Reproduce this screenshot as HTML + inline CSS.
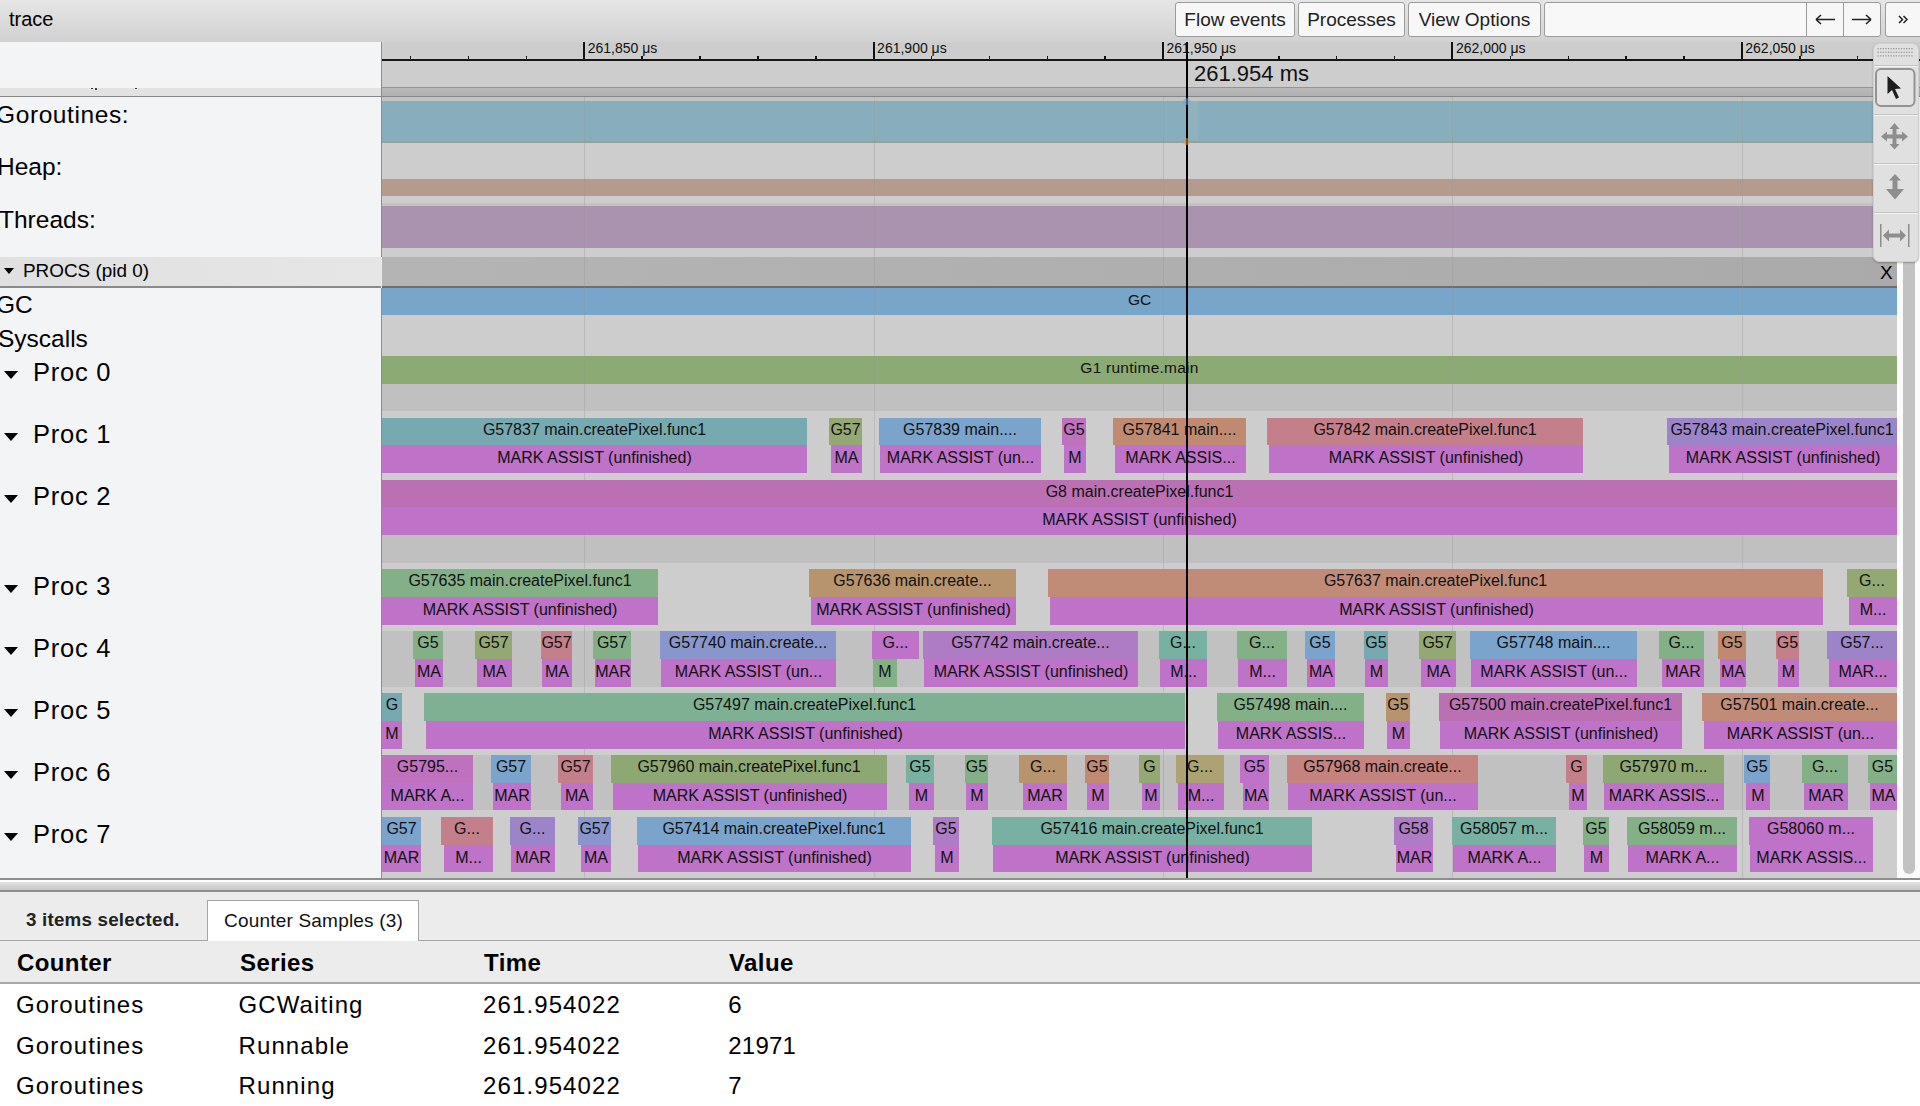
<!DOCTYPE html>
<html><head><meta charset="utf-8">
<style>
*{box-sizing:border-box;}
html,body{margin:0;padding:0;width:1920px;height:1106px;overflow:hidden;background:#ececec;font-family:"Liberation Sans",sans-serif;color:#000;}
.a{position:absolute;}
.t{position:absolute;white-space:nowrap;line-height:1;}
#top{left:0;top:0;width:1920px;height:42px;background:linear-gradient(#e6e6e6,#d1d1d1);}
.btn{position:absolute;top:2px;height:35px;border:1px solid #9c9c9c;border-radius:3px;background:#f7f7f7;font-size:19px;color:#222;text-align:center;line-height:33px;white-space:nowrap;}
#left{left:0;top:42px;width:381px;height:837px;background:#f3f4f6;}
#lborder{left:381px;top:42px;width:1px;height:837px;background:#8c8c8c;}
#ruler{left:382px;top:42px;width:1538px;height:45px;background:#cdcdcd;}
.mt{position:absolute;top:42px;width:2px;height:18px;background:#111;}
.mn{position:absolute;top:56px;width:1.5px;height:4px;background:#111;}
.rl{position:absolute;top:40px;font-size:14px;line-height:16px;color:#111;white-space:nowrap;}
.grid{position:absolute;top:97px;width:1px;height:781px;background:rgba(150,150,150,0.33);}
.s{position:absolute;overflow:hidden;white-space:nowrap;text-align:center;font-size:16px;line-height:27px;color:#111;letter-spacing:0;}
.s span{display:inline-block;transform:translateY(-2.2px);}
.s.r2 span{transform:translateY(-0.8px);}
.pl{position:absolute;left:33px;letter-spacing:0.75px;font-size:25.5px;line-height:1;white-space:nowrap;}
.tri{position:absolute;width:0;height:0;border-left:7.2px solid transparent;border-right:7.2px solid transparent;border-top:8px solid #000;}
.lbl{position:absolute;font-size:24.5px;line-height:1;white-space:nowrap;}
.tb{position:absolute;left:1873px;width:46px;}
.sep{position:absolute;left:1874px;width:44px;height:2px;background:linear-gradient(#c8c8c8,#f4f4f4);}
td,th{padding:0;}
.cell{position:absolute;font-size:24px;line-height:1;white-space:nowrap;letter-spacing:1.1px;}
</style></head><body>
<!-- top bar -->
<div id="top" class="a"></div>
<div class="t" style="left:9px;top:9px;font-size:20px;">trace</div>
<div class="btn" style="left:1175px;width:120px;">Flow events</div>
<div class="btn" style="left:1298px;width:107px;">Processes</div>
<div class="btn" style="left:1408px;width:133px;">View Options</div>
<div class="btn" style="left:1544px;width:263px;border-radius:3px 0 0 3px;background:#f8f8f8;"></div>
<div class="btn" style="left:1806px;width:38px;border-radius:0;"><svg width="36" height="33" viewBox="0 0 36 33"><path d="M9 16.5 H28 M9 16.5 L14 12 M9 16.5 L14 21" stroke="#222" stroke-width="1.6" fill="none"/></svg></div>
<div class="btn" style="left:1843px;width:38px;border-radius:0 3px 3px 0;"><svg width="36" height="33" viewBox="0 0 36 33"><path d="M8 16.5 H27 M27 16.5 L22 12 M27 16.5 L22 21" stroke="#222" stroke-width="1.6" fill="none"/></svg></div>
<div class="btn" style="left:1885px;width:45px;"><svg width="43" height="33" viewBox="0 0 43 33"><path d="M13 13 L16.5 16.5 L13 20 M17.5 13 L21 16.5 L17.5 20" stroke="#222" stroke-width="1.5" fill="none"/></svg></div>

<!-- left panel -->
<div id="left" class="a"></div>
<div class="a" style="left:381px;top:42px;width:1px;height:215px;background:#8c8c8c;"></div>
<div class="a" style="left:381px;top:288px;width:1px;height:590px;background:#8c8c8c;"></div>
<div class="a" style="left:0;top:88px;width:381px;height:8px;background:#e2e2e2;"></div>
<div class="a" style="left:91px;top:88px;width:1.5px;height:1px;background:#333;"></div><div class="a" style="left:94.5px;top:87.5px;width:2.5px;height:2.5px;background:#111;border-radius:1px;"></div><div class="a" style="left:134.5px;top:88px;width:2px;height:1px;background:#444;"></div>

<!-- ruler -->
<div id="ruler" class="a"></div>
<div class="a" style="left:382px;top:59px;width:1538px;height:2px;background:#161616;"></div>
<div class="mt" style="left:583.2px"></div>
<div class="t" style="left:587.7px;top:40.8px;font-size:14px;color:#111;">261,850 μs</div>
<div class="mt" style="left:872.6px"></div>
<div class="t" style="left:877.1px;top:40.8px;font-size:14px;color:#111;">261,900 μs</div>
<div class="mt" style="left:1162.0px"></div>
<div class="t" style="left:1166.5px;top:40.8px;font-size:14px;color:#111;">261,950 μs</div>
<div class="mt" style="left:1451.4px"></div>
<div class="t" style="left:1455.9px;top:40.8px;font-size:14px;color:#111;">262,000 μs</div>
<div class="mt" style="left:1740.8px"></div>
<div class="t" style="left:1745.3px;top:40.8px;font-size:14px;color:#111;">262,050 μs</div>
<div class="mn" style="left:409.9px"></div>
<div class="mn" style="left:467.7px"></div>
<div class="mn" style="left:525.6px"></div>
<div class="mn" style="left:641.4px"></div>
<div class="mn" style="left:699.3px"></div>
<div class="mn" style="left:757.1px"></div>
<div class="mn" style="left:815.0px"></div>
<div class="mn" style="left:930.8px"></div>
<div class="mn" style="left:988.7px"></div>
<div class="mn" style="left:1046.5px"></div>
<div class="mn" style="left:1104.4px"></div>
<div class="mn" style="left:1220.2px"></div>
<div class="mn" style="left:1278.1px"></div>
<div class="mn" style="left:1335.9px"></div>
<div class="mn" style="left:1393.8px"></div>
<div class="mn" style="left:1509.6px"></div>
<div class="mn" style="left:1567.5px"></div>
<div class="mn" style="left:1625.3px"></div>
<div class="mn" style="left:1683.2px"></div>
<div class="mn" style="left:1799.0px"></div>
<div class="mn" style="left:1856.9px"></div>
<div class="t" style="left:1194px;top:63px;font-size:22px;color:#111;">261.954 ms</div>
<div class="a" style="left:382px;top:87px;width:1538px;height:1px;background:#949494;"></div>
<div class="a" style="left:382px;top:88px;width:1538px;height:8px;background:linear-gradient(#b9b9b9,#b1b1b1);"></div>
<div class="a" style="left:0;top:96px;width:1920px;height:1px;background:#878787;"></div>

<!-- track area -->
<div class="a" style="left:382px;top:97px;width:1515px;height:781px;background:#cdcdcd;"></div>
<div class="a" style="left:382px;top:97px;width:1515px;height:4px;background:#c3c3c3;"></div>
<div class="a" style="left:382px;top:101px;width:1515px;height:40px;background:#88aebd;"></div>
<div class="a" style="left:1187px;top:101px;width:11px;height:40px;background:#90b2be;"></div>
<div class="a" style="left:382px;top:141px;width:1515px;height:2px;background:#94a394;"></div>
<div class="a" style="left:382px;top:179px;width:1515px;height:17px;background:#b59a8e;"></div>
<div class="a" style="left:382px;top:203px;width:1515px;height:3px;background:#c3c3c3;"></div>
<div class="a" style="left:382px;top:206px;width:1515px;height:42px;background:#a993ae;"></div>
<!-- procs header -->
<div class="a" style="left:0;top:257px;width:381px;height:29px;background:linear-gradient(90deg,#e0e0e0,#e6e6e6);"></div>
<div class="a" style="left:382px;top:257px;width:1515px;height:29px;background:linear-gradient(90deg,#b4b4b4,#aaaaaa);"></div>
<div class="a" style="left:0;top:286px;width:381px;height:2px;background:#8a8a8a;"></div>
<div class="a" style="left:382px;top:286px;width:1515px;height:2px;background:#6e6e6e;"></div>
<div class="t" style="left:1880px;top:263px;font-size:19px;">X</div>
<div class="a" style="left:382px;top:288px;width:1515px;height:27px;background:#77a6ca;"></div>
<div class="t" style="left:382px;width:1515px;text-align:center;top:292px;font-size:15.5px;color:#111;">GC</div>
<div class="a" style="left:382px;top:356px;width:1515px;height:28px;background:#8caa73;"></div>
<div class="t" style="left:382px;width:1515px;text-align:center;top:360px;font-size:15.5px;color:#111;letter-spacing:0.25px;">G1 runtime.main</div>
<!-- alternating proc backgrounds -->
<div class="a" style="left:382px;top:384px;width:1515px;height:27px;background:#c0c0c0;"></div>
<div class="a" style="left:382px;top:535px;width:1515px;height:28px;background:#c0c0c0;"></div>
<div class="a" style="left:382px;top:631px;width:1515px;height:56px;background:#c1c1c1;"></div>
<div class="a" style="left:382px;top:755px;width:1515px;height:55px;background:#c1c1c1;"></div>
<div class="grid" style="left:584px"></div><div class="grid" style="left:874px"></div><div class="grid" style="left:1163px"></div><div class="grid" style="left:1452px"></div><div class="grid" style="left:1742px"></div>
<div class="s" style="left:382px;top:418px;width:425px;height:27px;background:#76aab0"><span>G57837 main.createPixel.func1</span></div>
<div class="s" style="left:829px;top:418px;width:33px;height:27px;background:#94a874"><span>G57</span></div>
<div class="s" style="left:879px;top:418px;width:162px;height:27px;background:#7aa4cc"><span>G57839 main....</span></div>
<div class="s" style="left:1062px;top:418px;width:24px;height:27px;background:#be72be"><span>G5</span></div>
<div class="s" style="left:1113px;top:418px;width:133px;height:27px;background:#c08a70"><span>G57841 main....</span></div>
<div class="s" style="left:1267px;top:418px;width:316px;height:27px;background:#c4808a"><span>G57842 main.createPixel.func1</span></div>
<div class="s" style="left:1667px;top:418px;width:230px;height:27px;background:#9c84c8"><span>G57843 main.createPixel.func1</span></div>
<div class="s r2" style="left:382px;top:445px;width:425px;height:28px;background:#be72c8"><span>MARK ASSIST (unfinished)</span></div>
<div class="s r2" style="left:831px;top:445px;width:31px;height:28px;background:#be72c8"><span>MA</span></div>
<div class="s r2" style="left:880px;top:445px;width:161px;height:28px;background:#be72c8"><span>MARK ASSIST (un...</span></div>
<div class="s r2" style="left:1064px;top:445px;width:22px;height:28px;background:#be72c8"><span>M</span></div>
<div class="s r2" style="left:1115px;top:445px;width:131px;height:28px;background:#be72c8"><span>MARK ASSIS...</span></div>
<div class="s r2" style="left:1269px;top:445px;width:314px;height:28px;background:#be72c8"><span>MARK ASSIST (unfinished)</span></div>
<div class="s r2" style="left:1669px;top:445px;width:228px;height:28px;background:#be72c8"><span>MARK ASSIST (unfinished)</span></div>
<div class="s" style="left:382px;top:480px;width:1515px;height:27px;background:#bc70b4"><span>G8 main.createPixel.func1</span></div>
<div class="s r2" style="left:382px;top:507px;width:1515px;height:28px;background:#be72c8"><span>MARK ASSIST (unfinished)</span></div>
<div class="s" style="left:382px;top:569px;width:276px;height:28px;background:#84b088"><span>G57635 main.createPixel.func1</span></div>
<div class="s" style="left:809px;top:569px;width:207px;height:28px;background:#b8946e"><span>G57636 main.create...</span></div>
<div class="s" style="left:1048px;top:569px;width:775px;height:28px;background:#c08c78"><span>G57637 main.createPixel.func1</span></div>
<div class="s" style="left:1847px;top:569px;width:50px;height:28px;background:#94a874"><span>G...</span></div>
<div class="s r2" style="left:382px;top:597px;width:276px;height:28px;background:#be72c8"><span>MARK ASSIST (unfinished)</span></div>
<div class="s r2" style="left:811px;top:597px;width:205px;height:28px;background:#be72c8"><span>MARK ASSIST (unfinished)</span></div>
<div class="s r2" style="left:1050px;top:597px;width:773px;height:28px;background:#be72c8"><span>MARK ASSIST (unfinished)</span></div>
<div class="s r2" style="left:1849px;top:597px;width:48px;height:28px;background:#be72c8"><span>M...</span></div>
<div class="s" style="left:413px;top:631px;width:30px;height:28px;background:#84b088"><span>G5</span></div>
<div class="s" style="left:475px;top:631px;width:37px;height:28px;background:#94a874"><span>G57</span></div>
<div class="s" style="left:541px;top:631px;width:31px;height:28px;background:#c4808a"><span>G57</span></div>
<div class="s" style="left:593px;top:631px;width:38px;height:28px;background:#84b088"><span>G57</span></div>
<div class="s" style="left:660px;top:631px;width:176px;height:28px;background:#8896cc"><span>G57740 main.create...</span></div>
<div class="s" style="left:872px;top:631px;width:47px;height:28px;background:#be72c8"><span>G...</span></div>
<div class="s" style="left:923px;top:631px;width:215px;height:28px;background:#ae7cc4"><span>G57742 main.create...</span></div>
<div class="s" style="left:1159px;top:631px;width:48px;height:28px;background:#78b0a2"><span>G...</span></div>
<div class="s" style="left:1237px;top:631px;width:50px;height:28px;background:#84b088"><span>G...</span></div>
<div class="s" style="left:1305px;top:631px;width:30px;height:28px;background:#7aa4cc"><span>G5</span></div>
<div class="s" style="left:1364px;top:631px;width:24px;height:28px;background:#76aab0"><span>G5</span></div>
<div class="s" style="left:1419px;top:631px;width:37px;height:28px;background:#94a874"><span>G57</span></div>
<div class="s" style="left:1470px;top:631px;width:167px;height:28px;background:#7aa4cc"><span>G57748 main....</span></div>
<div class="s" style="left:1659px;top:631px;width:45px;height:28px;background:#84b088"><span>G...</span></div>
<div class="s" style="left:1718px;top:631px;width:28px;height:28px;background:#c08a70"><span>G5</span></div>
<div class="s" style="left:1776px;top:631px;width:23px;height:28px;background:#c4808a"><span>G5</span></div>
<div class="s" style="left:1827px;top:631px;width:70px;height:28px;background:#9c84c8"><span>G57...</span></div>
<div class="s r2" style="left:415px;top:659px;width:28px;height:28px;background:#be72c8"><span>MA</span></div>
<div class="s r2" style="left:477px;top:659px;width:35px;height:28px;background:#be72c8"><span>MA</span></div>
<div class="s r2" style="left:542px;top:659px;width:30px;height:28px;background:#be72c8"><span>MA</span></div>
<div class="s r2" style="left:595px;top:659px;width:36px;height:28px;background:#be72c8"><span>MAR</span></div>
<div class="s r2" style="left:661px;top:659px;width:175px;height:28px;background:#be72c8"><span>MARK ASSIST (un...</span></div>
<div class="s r2" style="left:873px;top:659px;width:24px;height:28px;background:#84b088"><span>M</span></div>
<div class="s r2" style="left:924px;top:659px;width:214px;height:28px;background:#be72c8"><span>MARK ASSIST (unfinished)</span></div>
<div class="s r2" style="left:1160px;top:659px;width:47px;height:28px;background:#be72c8"><span>M...</span></div>
<div class="s r2" style="left:1238px;top:659px;width:49px;height:28px;background:#be72c8"><span>M...</span></div>
<div class="s r2" style="left:1307px;top:659px;width:28px;height:28px;background:#be72c8"><span>MA</span></div>
<div class="s r2" style="left:1365px;top:659px;width:23px;height:28px;background:#be72c8"><span>M</span></div>
<div class="s r2" style="left:1421px;top:659px;width:35px;height:28px;background:#be72c8"><span>MA</span></div>
<div class="s r2" style="left:1471px;top:659px;width:166px;height:28px;background:#be72c8"><span>MARK ASSIST (un...</span></div>
<div class="s r2" style="left:1662px;top:659px;width:42px;height:28px;background:#be72c8"><span>MAR</span></div>
<div class="s r2" style="left:1720px;top:659px;width:26px;height:28px;background:#be72c8"><span>MA</span></div>
<div class="s r2" style="left:1778px;top:659px;width:21px;height:28px;background:#be72c8"><span>M</span></div>
<div class="s r2" style="left:1829px;top:659px;width:68px;height:28px;background:#be72c8"><span>MAR...</span></div>
<div class="s" style="left:382px;top:693px;width:20px;height:28px;background:#76aab0"><span>G</span></div>
<div class="s" style="left:424px;top:693px;width:761px;height:28px;background:#7eb194"><span>G57497 main.createPixel.func1</span></div>
<div class="s" style="left:1217px;top:693px;width:147px;height:28px;background:#84b088"><span>G57498 main....</span></div>
<div class="s" style="left:1386px;top:693px;width:24px;height:28px;background:#b8946e"><span>G5</span></div>
<div class="s" style="left:1439px;top:693px;width:243px;height:28px;background:#bc70b4"><span>G57500 main.createPixel.func1</span></div>
<div class="s" style="left:1702px;top:693px;width:195px;height:28px;background:#c08c78"><span>G57501 main.create...</span></div>
<div class="s r2" style="left:382px;top:721px;width:20px;height:28px;background:#be72c8"><span>M</span></div>
<div class="s r2" style="left:426px;top:721px;width:759px;height:28px;background:#be72c8"><span>MARK ASSIST (unfinished)</span></div>
<div class="s r2" style="left:1218px;top:721px;width:146px;height:28px;background:#be72c8"><span>MARK ASSIS...</span></div>
<div class="s r2" style="left:1387px;top:721px;width:23px;height:28px;background:#be72c8"><span>M</span></div>
<div class="s r2" style="left:1440px;top:721px;width:242px;height:28px;background:#be72c8"><span>MARK ASSIST (unfinished)</span></div>
<div class="s r2" style="left:1704px;top:721px;width:193px;height:28px;background:#be72c8"><span>MARK ASSIST (un...</span></div>
<div class="s" style="left:382px;top:755px;width:91px;height:28px;background:#be72be"><span>G5795...</span></div>
<div class="s" style="left:491px;top:755px;width:40px;height:28px;background:#7aa4cc"><span>G57</span></div>
<div class="s" style="left:558px;top:755px;width:35px;height:28px;background:#c4808a"><span>G57</span></div>
<div class="s" style="left:611px;top:755px;width:276px;height:28px;background:#8ea874"><span>G57960 main.createPixel.func1</span></div>
<div class="s" style="left:906px;top:755px;width:28px;height:28px;background:#78b0a2"><span>G5</span></div>
<div class="s" style="left:965px;top:755px;width:23px;height:28px;background:#84b088"><span>G5</span></div>
<div class="s" style="left:1019px;top:755px;width:48px;height:28px;background:#b8946e"><span>G...</span></div>
<div class="s" style="left:1085px;top:755px;width:24px;height:28px;background:#c08a70"><span>G5</span></div>
<div class="s" style="left:1139px;top:755px;width:21px;height:28px;background:#94a874"><span>G</span></div>
<div class="s" style="left:1176px;top:755px;width:48px;height:28px;background:#aca272"><span>G...</span></div>
<div class="s" style="left:1240px;top:755px;width:29px;height:28px;background:#be72c8"><span>G5</span></div>
<div class="s" style="left:1287px;top:755px;width:191px;height:28px;background:#c4837e"><span>G57968 main.create...</span></div>
<div class="s" style="left:1566px;top:755px;width:21px;height:28px;background:#c4808a"><span>G</span></div>
<div class="s" style="left:1603px;top:755px;width:121px;height:28px;background:#8ea874"><span>G57970 m...</span></div>
<div class="s" style="left:1744px;top:755px;width:26px;height:28px;background:#7aa4cc"><span>G5</span></div>
<div class="s" style="left:1802px;top:755px;width:46px;height:28px;background:#84b088"><span>G...</span></div>
<div class="s" style="left:1868px;top:755px;width:29px;height:28px;background:#84b088"><span>G5</span></div>
<div class="s r2" style="left:382px;top:783px;width:91px;height:27px;background:#be72c8"><span>MARK A...</span></div>
<div class="s r2" style="left:493px;top:783px;width:38px;height:27px;background:#be72c8"><span>MAR</span></div>
<div class="s r2" style="left:561px;top:783px;width:32px;height:27px;background:#be72c8"><span>MA</span></div>
<div class="s r2" style="left:613px;top:783px;width:274px;height:27px;background:#be72c8"><span>MARK ASSIST (unfinished)</span></div>
<div class="s r2" style="left:909px;top:783px;width:25px;height:27px;background:#be72c8"><span>M</span></div>
<div class="s r2" style="left:966px;top:783px;width:22px;height:27px;background:#be72c8"><span>M</span></div>
<div class="s r2" style="left:1023px;top:783px;width:44px;height:27px;background:#be72c8"><span>MAR</span></div>
<div class="s r2" style="left:1087px;top:783px;width:22px;height:27px;background:#be72c8"><span>M</span></div>
<div class="s r2" style="left:1142px;top:783px;width:18px;height:27px;background:#be72c8"><span>M</span></div>
<div class="s r2" style="left:1178px;top:783px;width:46px;height:27px;background:#be72c8"><span>M...</span></div>
<div class="s r2" style="left:1243px;top:783px;width:26px;height:27px;background:#be72c8"><span>MA</span></div>
<div class="s r2" style="left:1288px;top:783px;width:190px;height:27px;background:#be72c8"><span>MARK ASSIST (un...</span></div>
<div class="s r2" style="left:1569px;top:783px;width:18px;height:27px;background:#be72c8"><span>M</span></div>
<div class="s r2" style="left:1604px;top:783px;width:120px;height:27px;background:#be72c8"><span>MARK ASSIS...</span></div>
<div class="s r2" style="left:1746px;top:783px;width:24px;height:27px;background:#be72c8"><span>M</span></div>
<div class="s r2" style="left:1804px;top:783px;width:44px;height:27px;background:#be72c8"><span>MAR</span></div>
<div class="s r2" style="left:1870px;top:783px;width:27px;height:27px;background:#be72c8"><span>MA</span></div>
<div class="s" style="left:382px;top:817px;width:39px;height:28px;background:#7aa4cc"><span>G57</span></div>
<div class="s" style="left:441px;top:817px;width:52px;height:28px;background:#c4808a"><span>G...</span></div>
<div class="s" style="left:510px;top:817px;width:45px;height:28px;background:#9c84c8"><span>G...</span></div>
<div class="s" style="left:578px;top:817px;width:33px;height:28px;background:#8896cc"><span>G57</span></div>
<div class="s" style="left:637px;top:817px;width:274px;height:28px;background:#7aa4cc"><span>G57414 main.createPixel.func1</span></div>
<div class="s" style="left:933px;top:817px;width:26px;height:28px;background:#ae7cc4"><span>G5</span></div>
<div class="s" style="left:992px;top:817px;width:320px;height:28px;background:#78b0a2"><span>G57416 main.createPixel.func1</span></div>
<div class="s" style="left:1394px;top:817px;width:39px;height:28px;background:#ae7cc4"><span>G58</span></div>
<div class="s" style="left:1452px;top:817px;width:104px;height:28px;background:#78b0a2"><span>G58057 m...</span></div>
<div class="s" style="left:1583px;top:817px;width:26px;height:28px;background:#84b088"><span>G5</span></div>
<div class="s" style="left:1627px;top:817px;width:110px;height:28px;background:#84b088"><span>G58059 m...</span></div>
<div class="s" style="left:1749px;top:817px;width:124px;height:28px;background:#be72c8"><span>G58060 m...</span></div>
<div class="s r2" style="left:382px;top:845px;width:39px;height:27px;background:#be72c8"><span>MAR</span></div>
<div class="s r2" style="left:444px;top:845px;width:49px;height:27px;background:#be72c8"><span>M...</span></div>
<div class="s r2" style="left:511px;top:845px;width:44px;height:27px;background:#be72c8"><span>MAR</span></div>
<div class="s r2" style="left:581px;top:845px;width:30px;height:27px;background:#be72c8"><span>MA</span></div>
<div class="s r2" style="left:638px;top:845px;width:273px;height:27px;background:#be72c8"><span>MARK ASSIST (unfinished)</span></div>
<div class="s r2" style="left:935px;top:845px;width:24px;height:27px;background:#be72c8"><span>M</span></div>
<div class="s r2" style="left:993px;top:845px;width:319px;height:27px;background:#be72c8"><span>MARK ASSIST (unfinished)</span></div>
<div class="s r2" style="left:1396px;top:845px;width:37px;height:27px;background:#be72c8"><span>MAR</span></div>
<div class="s r2" style="left:1453px;top:845px;width:103px;height:27px;background:#be72c8"><span>MARK A...</span></div>
<div class="s r2" style="left:1584px;top:845px;width:25px;height:27px;background:#be72c8"><span>M</span></div>
<div class="s r2" style="left:1628px;top:845px;width:109px;height:27px;background:#be72c8"><span>MARK A...</span></div>
<div class="s r2" style="left:1750px;top:845px;width:123px;height:27px;background:#be72c8"><span>MARK ASSIS...</span></div>
<!-- cursor -->
<div class="a" style="left:1186px;top:42px;width:1.5px;height:836px;background:#000;"></div>
<div class="a" style="left:1183px;top:98px;width:7px;height:7px;border-radius:50%;background:rgba(110,165,215,0.55);"></div>
<div class="a" style="left:1183px;top:138px;width:7px;height:7px;border-radius:50%;background:rgba(215,150,90,0.55);"></div>

<!-- left labels -->
<div class="lbl" style="left:-4px;top:103px;letter-spacing:0.6px;">Goroutines:</div>
<div class="lbl" style="left:-3px;top:155px;">Heap:</div>
<div class="lbl" style="left:-1px;top:208px;">Threads:</div>
<div class="tri" style="left:4px;top:268px;border-left-width:5.5px;border-right-width:5.5px;border-top-width:6.5px;"></div>
<div class="t" style="left:23px;top:262px;font-size:18.9px;">PROCS (pid 0)</div>
<div class="lbl" style="left:-4px;top:293px;">GC</div>
<div class="lbl" style="left:-2px;top:327px;">Syscalls</div>
<div class="tri" style="left:4px;top:371px"></div>
<div class="pl" style="top:360.4px">Proc 0</div>
<div class="tri" style="left:4px;top:433px"></div>
<div class="pl" style="top:422.4px">Proc 1</div>
<div class="tri" style="left:4px;top:495px"></div>
<div class="pl" style="top:484.4px">Proc 2</div>
<div class="tri" style="left:4px;top:585px"></div>
<div class="pl" style="top:574.4px">Proc 3</div>
<div class="tri" style="left:4px;top:647px"></div>
<div class="pl" style="top:636.4px">Proc 4</div>
<div class="tri" style="left:4px;top:709px"></div>
<div class="pl" style="top:698.4px">Proc 5</div>
<div class="tri" style="left:4px;top:771px"></div>
<div class="pl" style="top:760.4px">Proc 6</div>
<div class="tri" style="left:4px;top:833px"></div>
<div class="pl" style="top:822.4px">Proc 7</div>

<!-- scrollbar -->
<div class="a" style="left:1897px;top:97px;width:23px;height:781px;background:#fbfbfb;"></div>
<div class="a" style="left:1903px;top:97px;width:12px;height:777px;border-radius:0 0 6px 6px;background:#c2c2c2;"></div>

<!-- toolbar -->
<div class="a" style="left:1873px;top:43px;width:46px;height:219px;border-radius:6px;background:#e0e0e0;border:1px solid #cfcfcf;box-shadow:0 1px 2px rgba(0,0,0,0.25);"></div>
<svg class="a" style="left:1873px;top:43px;" width="46" height="219" viewBox="0 0 46 219">
  <g fill="#9a9a9a">
    <rect x="4.5" y="5.0" width="1.3" height="1.3"/><rect x="7.1" y="5.0" width="1.3" height="1.3"/><rect x="9.7" y="5.0" width="1.3" height="1.3"/><rect x="12.3" y="5.0" width="1.3" height="1.3"/><rect x="14.9" y="5.0" width="1.3" height="1.3"/><rect x="17.5" y="5.0" width="1.3" height="1.3"/><rect x="20.1" y="5.0" width="1.3" height="1.3"/><rect x="22.7" y="5.0" width="1.3" height="1.3"/><rect x="25.3" y="5.0" width="1.3" height="1.3"/><rect x="27.9" y="5.0" width="1.3" height="1.3"/><rect x="30.5" y="5.0" width="1.3" height="1.3"/><rect x="33.1" y="5.0" width="1.3" height="1.3"/><rect x="35.7" y="5.0" width="1.3" height="1.3"/><rect x="38.3" y="5.0" width="1.3" height="1.3"/><rect x="4.5" y="8.6" width="1.3" height="1.3"/><rect x="7.1" y="8.6" width="1.3" height="1.3"/><rect x="9.7" y="8.6" width="1.3" height="1.3"/><rect x="12.3" y="8.6" width="1.3" height="1.3"/><rect x="14.9" y="8.6" width="1.3" height="1.3"/><rect x="17.5" y="8.6" width="1.3" height="1.3"/><rect x="20.1" y="8.6" width="1.3" height="1.3"/><rect x="22.7" y="8.6" width="1.3" height="1.3"/><rect x="25.3" y="8.6" width="1.3" height="1.3"/><rect x="27.9" y="8.6" width="1.3" height="1.3"/><rect x="30.5" y="8.6" width="1.3" height="1.3"/><rect x="33.1" y="8.6" width="1.3" height="1.3"/><rect x="35.7" y="8.6" width="1.3" height="1.3"/><rect x="38.3" y="8.6" width="1.3" height="1.3"/><rect x="4.5" y="12.2" width="1.3" height="1.3"/><rect x="7.1" y="12.2" width="1.3" height="1.3"/><rect x="9.7" y="12.2" width="1.3" height="1.3"/><rect x="12.3" y="12.2" width="1.3" height="1.3"/><rect x="14.9" y="12.2" width="1.3" height="1.3"/><rect x="17.5" y="12.2" width="1.3" height="1.3"/><rect x="20.1" y="12.2" width="1.3" height="1.3"/><rect x="22.7" y="12.2" width="1.3" height="1.3"/><rect x="25.3" y="12.2" width="1.3" height="1.3"/><rect x="27.9" y="12.2" width="1.3" height="1.3"/><rect x="30.5" y="12.2" width="1.3" height="1.3"/><rect x="33.1" y="12.2" width="1.3" height="1.3"/><rect x="35.7" y="12.2" width="1.3" height="1.3"/><rect x="38.3" y="12.2" width="1.3" height="1.3"/>
  </g>
  <rect x="1" y="22" width="44" height="1" fill="#c4c4c4"/>
  <rect x="1" y="23" width="44" height="1" fill="#f2f2f2"/>
  <rect x="3" y="26" width="38.5" height="37" rx="5" fill="#e3e3e3" stroke="#939393" stroke-width="2"/>
  <path d="M14.5 33 L14.5 51 L19 47 L23 56 L26 54.5 L22 46 L28 45.5 Z" fill="#1e1e1e"/>
  <rect x="1" y="71" width="44" height="1" fill="#c4c4c4"/>
  <rect x="1" y="72" width="44" height="1" fill="#f2f2f2"/>
  <path d="M21.5 80 L16.5 86 L19.5 86 L19.5 91.5 L14 91.5 L14 88.5 L8 93.5 L14 98.5 L14 95.5 L19.5 95.5 L19.5 101 L16.5 101 L21.5 106.5 L26.5 101 L23.5 101 L23.5 95.5 L29 95.5 L29 98.5 L35 93.5 L29 88.5 L29 91.5 L23.5 91.5 L23.5 86 L26.5 86 Z" fill="#8e8e8e"/>
  <rect x="1" y="120" width="44" height="1" fill="#c4c4c4"/>
  <rect x="1" y="121" width="44" height="1" fill="#f2f2f2"/>
  <path d="M22 131 L16 137.5 L19.5 137.5 L19.5 146 L13 146 L22 156.5 L31 146 L24.5 146 L24.5 137.5 L28 137.5 Z" fill="#8e8e8e"/>
  <rect x="1" y="169" width="44" height="1" fill="#c4c4c4"/>
  <rect x="1" y="170" width="44" height="1" fill="#f2f2f2"/>
  <rect x="7" y="181" width="1.5" height="23" fill="#8e8e8e"/>
  <rect x="35" y="181" width="1.5" height="23" fill="#8e8e8e"/>
  <path d="M10 192.5 L16 186.5 L16 190.5 L27 190.5 L27 186.5 L33 192.5 L27 198.5 L27 194.5 L16 194.5 L16 198.5 Z" fill="#8e8e8e"/>
</svg>

<!-- bottom -->
<div class="a" style="left:0;top:878px;width:1920px;height:2px;background:#8e8e8e;"></div>
<div class="a" style="left:0;top:880px;width:1920px;height:2px;background:#fdfdfd;"></div>
<div class="a" style="left:0;top:882px;width:1920px;height:8px;background:linear-gradient(#e2e2e2,#c6c6c6);"></div>
<div class="a" style="left:0;top:890px;width:1920px;height:2px;background:#8e8e8e;"></div>
<div class="a" style="left:0;top:892px;width:1920px;height:48px;background:#ececec;"></div>
<div class="t" style="left:26px;top:911px;font-size:18.8px;font-weight:bold;color:#222;letter-spacing:0.2px;">3 items selected.</div>
<div class="a" style="left:207px;top:900px;width:212px;height:41px;background:#fff;border:1px solid #a6a6a6;border-bottom:none;"></div>
<div class="a" style="left:0;top:940px;width:1920px;height:1px;background:#a6a6a6;"></div>
<div class="a" style="left:208px;top:939px;width:210px;height:2px;background:#fff;"></div>
<div class="t" style="left:224px;top:911px;font-size:19px;color:#111;letter-spacing:0.2px;">Counter Samples (3)</div>
<div class="a" style="left:0;top:941px;width:1920px;height:41px;background:#ececec;"></div>
<div class="a" style="left:0;top:982px;width:1920px;height:2px;background:#a8a8a8;"></div>
<div class="a" style="left:0;top:984px;width:1920px;height:122px;background:#fff;"></div>
<div class="cell" style="left:17px;top:951px;font-weight:bold;letter-spacing:0.4px;">Counter</div>
<div class="cell" style="left:240px;top:951px;font-weight:bold;letter-spacing:0.4px;">Series</div>
<div class="cell" style="left:484px;top:951px;font-weight:bold;letter-spacing:0.4px;">Time</div>
<div class="cell" style="left:729px;top:951px;font-weight:bold;letter-spacing:0.4px;">Value</div>
<div class="cell" style="left:16.0px;top:993.2px">Goroutines</div>
<div class="cell" style="left:238.5px;top:993.2px">GCWaiting</div>
<div class="cell" style="left:483.1px;top:993.2px">261.954022</div>
<div class="cell" style="left:728.3px;top:993.2px;letter-spacing:0.2px">6</div>
<div class="cell" style="left:16.0px;top:1033.5px">Goroutines</div>
<div class="cell" style="left:238.5px;top:1033.5px">Runnable</div>
<div class="cell" style="left:483.1px;top:1033.5px">261.954022</div>
<div class="cell" style="left:728.3px;top:1033.5px;letter-spacing:0.2px">21971</div>
<div class="cell" style="left:16.0px;top:1073.8px">Goroutines</div>
<div class="cell" style="left:238.5px;top:1073.8px">Running</div>
<div class="cell" style="left:483.1px;top:1073.8px">261.954022</div>
<div class="cell" style="left:728.3px;top:1073.8px;letter-spacing:0.2px">7</div>
</body></html>
